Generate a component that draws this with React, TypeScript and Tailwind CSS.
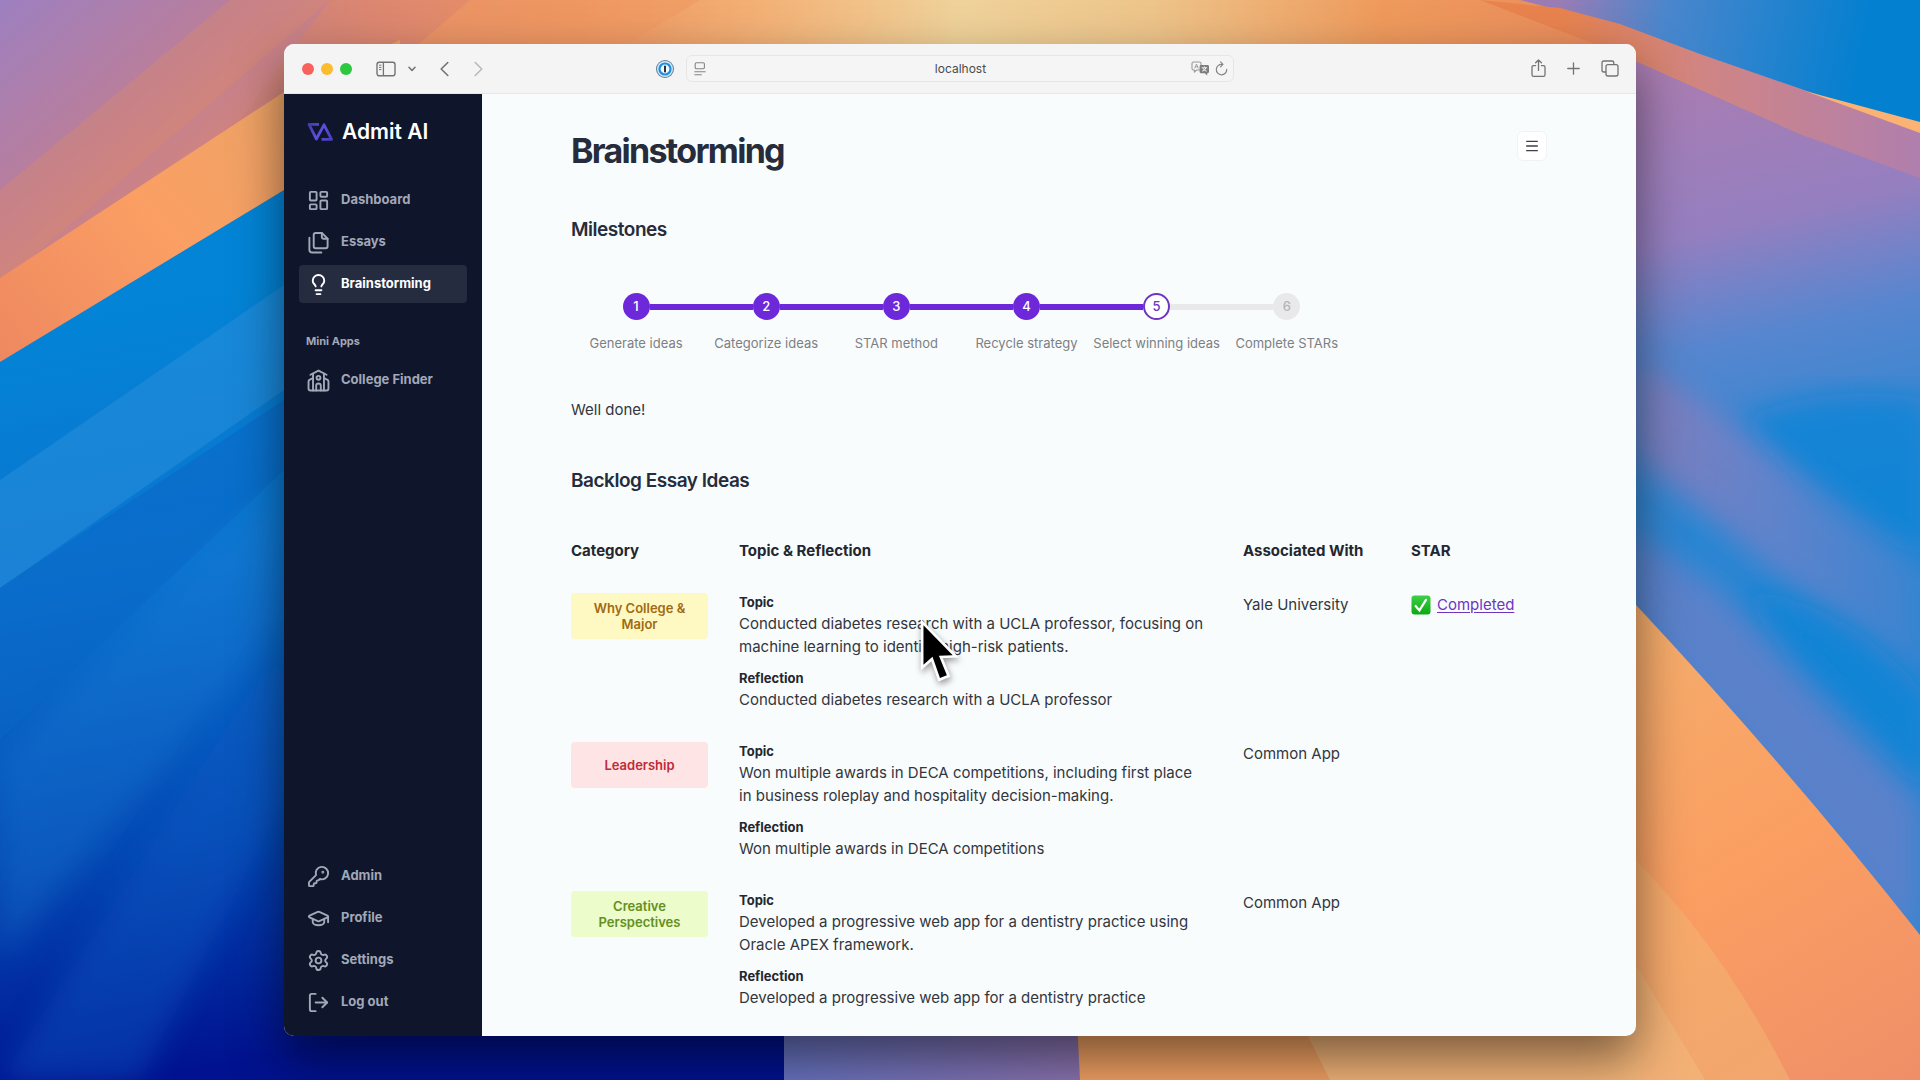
import { useState } from 'react';
import type { ComponentType, ReactNode, SVGProps } from 'react';
import {
  GraduationCap,
  KeyRound,
  LayoutDashboard,
  Lightbulb,
  LogOut,
  Menu,
  Settings,
} from 'lucide-react';

interface NavItem {
  label: string;
  icon: ComponentType<SVGProps<SVGSVGElement>>;
}

interface Idea {
  category: string;
  badge: string;
  topic: string;
  reflection: string;
  associatedWith: string;
  completed?: boolean;
}

function EssaysIcon(props: SVGProps<SVGSVGElement>) {
  return (
    <svg viewBox="0 0 24 24" fill="none" stroke="currentColor" strokeLinecap="round" strokeLinejoin="round" {...props}>
      <path d="M15.5 2 H9 Q7 2 7 4 V16 Q7 18 9 18 H19.5 Q21.5 18 21.5 16 V8 Z" />
      <path d="M15.5 2 V6.6 Q15.5 8 17 8 H21.5" />
      <path d="M2.5 7 V19.5 Q2.5 22.5 5.5 22.5 H15" />
    </svg>
  );
}

function CollegeIcon(props: SVGProps<SVGSVGElement>) {
  return (
    <svg viewBox="0 0 24 24" fill="none" stroke="currentColor" strokeLinecap="round" strokeLinejoin="round" {...props}>
      <path d="M3.6 6 L12 1.6 L20.4 6" />
      <path d="M6.3 5 V22.4 M17.7 5 V22.4" />
      <path d="M6.3 9.6 L3 11 Q1.6 11.6 1.6 13 V20.4 Q1.6 22.4 3.6 22.4 H20.4 Q22.4 22.4 22.4 20.4 V13 Q22.4 11.6 21 11 L17.7 9.6" />
      <circle cx="12" cy="9.2" r="2" />
      <path d="M9.6 22.4 V17.6 Q9.6 15.2 12 15.2 Q14.4 15.2 14.4 17.6 V22.4" />
    </svg>
  );
}

const mainNav: NavItem[] = [
  { label: 'Dashboard', icon: LayoutDashboard },
  { label: 'Essays', icon: EssaysIcon },
  { label: 'Brainstorming', icon: Lightbulb },
];

const miniApps: NavItem[] = [{ label: 'College Finder', icon: CollegeIcon }];

const accountNav: NavItem[] = [
  { label: 'Admin', icon: KeyRound },
  { label: 'Profile', icon: GraduationCap },
  { label: 'Settings', icon: Settings },
  { label: 'Log out', icon: LogOut },
];

const steps = [
  'Generate ideas',
  'Categorize ideas',
  'STAR method',
  'Recycle strategy',
  'Select winning ideas',
  'Complete STARs',
];

const ideas: Idea[] = [
  {
    category: 'Why College & Major',
    badge: 'bg-[#fef9c3] text-[#a16a12]',
    topic:
      'Conducted diabetes research with a UCLA professor, focusing on machine learning to identify high-risk patients.',
    reflection: 'Conducted diabetes research with a UCLA professor',
    associatedWith: 'Yale University',
    completed: true,
  },
  {
    category: 'Leadership',
    badge: 'bg-[#ffe4e6] text-[#be2a38]',
    topic:
      'Won multiple awards in DECA competitions, including first place in business roleplay and hospitality decision-making.',
    reflection: 'Won multiple awards in DECA competitions',
    associatedWith: 'Common App',
  },
  {
    category: 'Creative Perspectives',
    badge: 'bg-[#ecfccb] text-[#648f22]',
    topic:
      'Developed a progressive web app for a dentistry practice using Oracle APEX framework.',
    reflection: 'Developed a progressive web app for a dentistry practice',
    associatedWith: 'Common App',
  },
];

function Wallpaper() {
  return (
    <svg
      className="absolute inset-0 h-full w-full"
      viewBox="0 0 1920 1080"
      preserveAspectRatio="none"
      aria-hidden="true"
    >
      <defs>
        <linearGradient id="top" x1="0" y1="0" x2="1920" y2="0" gradientUnits="userSpaceOnUse">
          <stop offset="0.12" stopColor="#c9817f" />
          <stop offset="0.2" stopColor="#dd8770" />
          <stop offset="0.3" stopColor="#ee9460" />
          <stop offset="0.4" stopColor="#f3b277" />
          <stop offset="0.5" stopColor="#efd29a" />
          <stop offset="0.6" stopColor="#edc48a" />
          <stop offset="0.72" stopColor="#ef9a5c" />
          <stop offset="0.85" stopColor="#e88a5c" />
        </linearGradient>
        <linearGradient id="corner" x1="0" y1="0" x2="200" y2="230" gradientUnits="userSpaceOnUse">
          <stop offset="0" stopColor="#9d80c0" />
          <stop offset="0.5" stopColor="#b97e9c" />
          <stop offset="1" stopColor="#dd8770" />
        </linearGradient>
        <linearGradient id="leftOrange" x1="0" y1="360" x2="320" y2="80" gradientUnits="userSpaceOnUse">
          <stop offset="0" stopColor="#ee8860" />
          <stop offset="0.5" stopColor="#fb9f64" />
          <stop offset="1" stopColor="#e9a467" />
        </linearGradient>
        <linearGradient id="leftBlue" x1="0" y1="330" x2="140" y2="1080" gradientUnits="userSpaceOnUse">
          <stop offset="0" stopColor="#0384d6" />
          <stop offset="0.35" stopColor="#0b73cf" />
          <stop offset="0.7" stopColor="#0448b4" />
          <stop offset="1" stopColor="#00128f" />
        </linearGradient>
        <linearGradient id="topBlue" x1="1560" y1="0" x2="1860" y2="60" gradientUnits="userSpaceOnUse">
          <stop offset="0" stopColor="#9a7cb4" />
          <stop offset="0.35" stopColor="#4a86cc" />
          <stop offset="1" stopColor="#0480d0" />
        </linearGradient>
        <linearGradient id="salmon" x1="1560" y1="0" x2="1920" y2="0" gradientUnits="userSpaceOnUse">
          <stop offset="0" stopColor="#e8834e" />
          <stop offset="0.4" stopColor="#d08584" />
          <stop offset="1" stopColor="#b07fae" />
        </linearGradient>
        <linearGradient id="mauve" x1="1660" y1="80" x2="1760" y2="520" gradientUnits="userSpaceOnUse">
          <stop offset="0" stopColor="#a97db2" />
          <stop offset="0.35" stopColor="#957fc0" />
          <stop offset="0.6" stopColor="#5686cf" />
          <stop offset="1" stopColor="#2a86d3" />
        </linearGradient>
        <linearGradient id="violetStreak" x1="1636" y1="0" x2="1920" y2="0" gradientUnits="userSpaceOnUse">
          <stop offset="0" stopColor="#8f7bb6" />
          <stop offset="0.45" stopColor="#7482c8" />
          <stop offset="1" stopColor="#4184d0" />
        </linearGradient>
        <linearGradient id="rightOrange" x1="1640" y1="620" x2="1920" y2="1080" gradientUnits="userSpaceOnUse">
          <stop offset="0" stopColor="#f5ad6c" />
          <stop offset="0.5" stopColor="#fb9e62" />
          <stop offset="1" stopColor="#ee8f68" />
        </linearGradient>
        <linearGradient id="bottomViolet" x1="780" y1="0" x2="1080" y2="0" gradientUnits="userSpaceOnUse">
          <stop offset="0" stopColor="#6672c0" />
          <stop offset="1" stopColor="#8a72ae" />
        </linearGradient>
        <filter id="soft" x="-10%" y="-10%" width="120%" height="120%">
          <feGaussianBlur stdDeviation="14" />
        </filter>
      </defs>

      <rect width="1920" height="1080" fill="url(#top)" />
      <path d="M0 0 H330 L240 120 L0 290 Z" fill="url(#corner)" />
      <path d="M470 0 H700 L600 60 H400 Z" fill="#f09a62" opacity="0.6" />

      {/* left side, warm folds over the blue ones */}
      <path d="M0 190 L230 0 H330 L0 285 Z" fill="#e08a68" opacity="0.35" />
      <path d="M0 278 L284 92 L400 40 V200 L0 364 Z" fill="url(#leftOrange)" />
      <path d="M0 362 L284 190 L900 500 V1080 H0 Z" fill="url(#leftBlue)" />
      <path d="M0 480 L284 285 V390 L0 588 Z" fill="#2b8fdc" opacity="0.5" />
      <path d="M0 588 L284 400 V470 L0 740 Z" fill="#0a66c6" opacity="0.5" />
      <path d="M0 760 L284 480 V620 L0 960 Z" fill="#1d7fd6" opacity="0.3" filter="url(#soft)" />
      <path d="M0 1080 L284 640 V800 L140 1080 Z" fill="#0a5cc4" opacity="0.4" filter="url(#soft)" />

      {/* right side */}
      <path d="M1520 0 L1600 21 L1700 58 L1800 90 L1920 124 V0 Z" fill="url(#topBlue)" />
      <path d="M1560 8 L1620 24 L1700 54 L1810 92 L1920 132 V180 L1800 134 L1636 60 L1480 0 Z" fill="url(#salmon)" />
      <path d="M1805 91 L1920 122 V133 Z" fill="#fbb272" />
      <path d="M1600 50 L1636 61 L1800 134 L1920 178 V940 L1600 570 Z" fill="url(#mauve)" />
      <path d="M1740 420 Q1830 380 1930 400 V560 Q1820 520 1740 420 Z" fill="#1184d6" opacity="0.8" filter="url(#soft)" />
      <path d="M1636 360 L1700 400 L1920 565 V690 L1760 560 L1636 455 Z" fill="url(#violetStreak)" opacity="0.75" filter="url(#soft)" />
      <path d="M1740 590 Q1850 600 1930 700 V800 L1800 680 Z" fill="#1184d6" opacity="0.8" filter="url(#soft)" />
      <path d="M1620 520 L1720 590 L1920 800 V950 L1620 610 Z" fill="#6a80c8" opacity="0.75" filter="url(#soft)" />
      <path d="M1600 564 L1637 606 Q1790 770 1920 935 V1080 H1600 Z" fill="url(#rightOrange)" />
      <path d="M1620 845 Q1720 940 1790 1080 H1500 V900 Z" fill="#f3b272" opacity="0.6" />
      <path d="M1636 965 L1705 1080 H1500 Z" fill="#f2bb80" opacity="0.5" />

      {/* strip under the window */}
      <path d="M784 1000 H1080 V1080 H784 Z" fill="url(#bottomViolet)" />
      <path d="M1076 1000 H1640 V1080 H1080 Z" fill="#f0a062" />
      <path d="M1290 1000 L1330 1080 H1640 V1000 Z" fill="#f2b478" />
    </svg>
  );
}

function ToolbarButton({ label, children }: { label: string; children: ReactNode }) {
  return (
    <button type="button" aria-label={label} className="flex h-5 items-center justify-center">
      {children}
    </button>
  );
}

function Toolbar() {
  const [url, setUrl] = useState('localhost');

  return (
    <header className="flex h-[50px] shrink-0 items-center border-b border-[#e6e6e6] bg-[#f4f4f4] text-[#737373]">
      <div className="flex flex-1 items-center justify-between pr-3 pl-[18px]">
        <div className="flex items-center">
          <div className="flex gap-[7px]">
            <button type="button" aria-label="Close" className="size-3 rounded-full bg-[#f9625c]" />
            <button type="button" aria-label="Minimize" className="size-3 rounded-full bg-[#fbbd2e]" />
            <button type="button" aria-label="Zoom" className="size-3 rounded-full bg-[#2bc840]" />
          </div>
          <div className="ml-6 flex items-center gap-3">
            <ToolbarButton label="Show sidebar">
              <svg width="20" height="16" viewBox="0 0 20 16" fill="none" stroke="currentColor">
                <rect x="1" y="1.2" width="18" height="13.6" rx="2.2" strokeWidth="1.4" />
                <path d="M7.4 1.2 V14.8" strokeWidth="1.3" />
                <path d="M3 4.2 H5.4 M3 6.4 H5.4 M3 8.6 H5.4" strokeWidth="1" />
              </svg>
            </ToolbarButton>
            <ToolbarButton label="Tab groups">
              <svg width="8" height="6" viewBox="0 0 8 6" fill="none" stroke="currentColor" strokeWidth="1.5" strokeLinecap="round" strokeLinejoin="round">
                <path d="M1 1.2 L4 4.4 L7 1.2" />
              </svg>
            </ToolbarButton>
          </div>
          <div className="ml-6 flex items-center gap-[25px]">
            <ToolbarButton label="Back">
              <svg width="9" height="16" viewBox="0 0 9 16" fill="none" stroke="currentColor" strokeWidth="1.6" strokeLinecap="round" strokeLinejoin="round">
                <path d="M7.8 1.5 L1.2 8 L7.8 14.5" />
              </svg>
            </ToolbarButton>
            <ToolbarButton label="Forward">
              <svg width="9" height="16" viewBox="0 0 9 16" fill="none" stroke="#b9b9b9" strokeWidth="1.6" strokeLinecap="round" strokeLinejoin="round">
                <path d="M1.2 1.5 L7.8 8 L1.2 14.5" />
              </svg>
            </ToolbarButton>
          </div>
        </div>
        <ToolbarButton label="Password manager">
          <svg width="18" height="18" viewBox="0 0 18 18">
            <circle cx="9" cy="9" r="9" fill="#5e7f96" />
            <circle cx="9" cy="9" r="8" fill="#cfe6f6" />
            <circle cx="9" cy="9" r="6.6" fill="#1f8fe0" />
            <circle cx="9" cy="9" r="4.4" fill="#f3f8fc" />
            <rect x="8" y="5.4" width="2" height="7.2" rx="0.8" fill="#2c2f3a" />
          </svg>
        </ToolbarButton>
      </div>

      <div className="flex h-[27px] w-[548px] items-center rounded-md border border-[#e6e6e6] bg-[#f5f5f5] pr-[5px] pl-[7px]">
        <ToolbarButton label="Page settings">
          <svg width="12" height="14" viewBox="0 0 12 14" fill="none" stroke="#848484" strokeWidth="1.1" strokeLinecap="round">
            <rect x="1.2" y="0.8" width="9.2" height="6" rx="1.2" />
            <path d="M0.8 9.8 H11.2 M0.8 12.8 H7.4" />
          </svg>
        </ToolbarButton>
        <input
          type="text"
          aria-label="Address"
          className="min-w-0 flex-1 bg-transparent pl-6 text-center text-[12px] text-[#4b4b4b] outline-none"
          value={url}
          onChange={(e) => setUrl(e.target.value)}
        />
        <div className="flex items-center gap-[5px]">
          <ToolbarButton label="Translate">
            <svg width="19" height="15" viewBox="0 0 19 15" fill="none" strokeLinejoin="round" strokeLinecap="round">
              <path d="M2.4 1 H8.6 Q10 1 10 2.4 V7.6 Q10 9 8.6 9 H5.6 L3.4 11.2 V9 H2.4 Q1 9 1 7.6 V2.4 Q1 1 2.4 1 Z" stroke="#9a9a9a" strokeWidth="1.1" />
              <path d="M3.8 7 L5.5 3 L7.2 7 M4.4 5.8 H6.6" stroke="#9a9a9a" strokeWidth="0.9" />
              <path d="M10 4 H16.6 Q18 4 18 5.4 V10.8 Q18 12.2 16.6 12.2 H16.2 V14.4 L13.8 12.2 H10 Q8.6 12.2 8.6 10.8 V5.4 Q8.6 4 10 4 Z" fill="#7d7d7d" />
              <path d="M11 6.8 H15.8 M13.4 5.8 V6.8 M11.4 10.2 Q14.4 9.6 15 6.8 M12 7.4 Q13 9.8 15.4 10.2" stroke="#f5f5f5" strokeWidth="0.9" />
            </svg>
          </ToolbarButton>
          <ToolbarButton label="Reload">
            <svg width="13" height="15" viewBox="0 0 13 15" fill="none" stroke="#858585" strokeWidth="1.2" strokeLinecap="round" strokeLinejoin="round">
              <path d="M7 3.4 A5.2 5.2 0 1 0 11.7 8.4" />
              <path d="M5.6 0.9 L8 3.4 L5.6 5.8" />
            </svg>
          </ToolbarButton>
        </div>
      </div>

      <div className="flex flex-1 items-center justify-end gap-[21px] pr-[17px] pl-[13px]">
        <ToolbarButton label="Share">
          <svg width="15" height="19" viewBox="0 0 15 19" fill="none" stroke="currentColor" strokeWidth="1.3" strokeLinecap="round" strokeLinejoin="round">
            <path d="M4.6 6.6 H2.6 Q1 6.6 1 8.2 V15.8 Q1 17.4 2.6 17.4 H12.4 Q14 17.4 14 15.8 V8.2 Q14 6.6 12.4 6.6 H10.4" />
            <path d="M7.5 11.4 V1.2 M4.6 3.8 L7.5 1 L10.4 3.8" />
          </svg>
        </ToolbarButton>
        <ToolbarButton label="New tab">
          <svg width="13" height="13" viewBox="0 0 13 13" stroke="currentColor" strokeWidth="1.3" strokeLinecap="round">
            <path d="M6.5 0.8 V12.2 M0.8 6.5 H12.2" />
          </svg>
        </ToolbarButton>
        <ToolbarButton label="Tab overview">
          <svg width="18" height="17" viewBox="0 0 18 17" fill="none" stroke="currentColor" strokeWidth="1.3" strokeLinejoin="round">
            <rect x="5" y="4.6" width="12" height="11.4" rx="2" />
            <path d="M5 12 H2.8 Q1 12 1 10.2 V2.8 Q1 1 2.8 1 H11 Q12.8 1 12.8 2.8 V4.6" />
          </svg>
        </ToolbarButton>
      </div>
    </header>
  );
}

function NavList({
  items,
  active,
  onSelect,
}: {
  items: NavItem[];
  active: string;
  onSelect: (label: string) => void;
}) {
  return (
    <ul className="flex flex-col gap-1">
      {items.map(({ label, icon: Icon }) => (
        <li key={label}>
          <a
            href="#"
            onClick={(e) => {
              e.preventDefault();
              onSelect(label);
            }}
            className={`flex h-[38px] items-center gap-[11px] rounded-sm px-2 text-[13px] font-bold ${
              active === label ? 'bg-[#262c3f] text-white' : 'text-[#a2a8b8]'
            }`}
          >
            <Icon className="size-[23px]" strokeWidth={2} />
            {label}
          </a>
        </li>
      ))}
    </ul>
  );
}

function Sidebar() {
  const [active, setActive] = useState('Brainstorming');

  return (
    <aside className="flex w-[198px] shrink-0 flex-col bg-[#0f152a] px-[15px] pt-[26px] pb-[15px]">
      <a href="#" className="flex h-6 items-center gap-2 pl-[7px] text-white">
        <svg width="28" height="20" viewBox="0 0 28 20" fill="none" strokeWidth="2.8" strokeLinejoin="round">
          <defs>
            <linearGradient id="brand" x1="0" y1="0" x2="28" y2="20" gradientUnits="userSpaceOnUse">
              <stop offset="0" stopColor="#3d35a0" />
              <stop offset="0.5" stopColor="#5b50e0" />
              <stop offset="1" stopColor="#4239b0" />
            </linearGradient>
          </defs>
          <path d="M13 2.4 H3 L10.4 17 L18 2.8 L25.6 17.4 H15.6" stroke="url(#brand)" />
        </svg>
        <span className="text-[21px] leading-6 font-semibold whitespace-nowrap">Admit AI</span>
      </a>

      <nav className="mt-[37px] flex flex-1 flex-col">
        <NavList items={mainNav} active={active} onSelect={setActive} />
        <h2 className="mt-[30px] mb-3 pl-[7px] text-[11px] leading-4 font-bold text-[#a2a8b8]">
          Mini Apps
        </h2>
        <NavList items={miniApps} active={active} onSelect={setActive} />
        <div className="mt-auto pt-8">
          <NavList items={accountNav} active={active} onSelect={setActive} />
        </div>
      </nav>
    </aside>
  );
}

function Stepper({ current }: { current: number }) {
  return (
    <ol className="mt-[49px] grid w-4/5 grid-cols-6">
      {steps.map((label, i) => {
        const step = i + 1;
        let circle = 'bg-[#e9e9eb] text-[#b4b4b8]';
        if (step < current) circle = 'bg-[#6d28d9] text-white';
        if (step === current) circle = 'border-2 border-[#6d35c0] bg-white text-[#6d35c0]';

        return (
          <li key={label} className="flex flex-col items-center gap-[13px]">
            <div className="flex w-full items-center">
              <span
                className={`h-[6px] flex-1 ${
                  i === 0 ? 'bg-transparent' : step <= current ? 'bg-[#6d28d9]' : 'bg-[#e9e9eb]'
                }`}
              />
              <span
                className={`flex size-[27px] items-center justify-center rounded-full text-[13px] font-medium ${circle}`}
              >
                {step}
              </span>
              <span
                className={`h-[6px] flex-1 ${
                  step === steps.length
                    ? 'bg-transparent'
                    : step < current
                      ? 'bg-[#6d28d9]'
                      : 'bg-[#e9e9eb]'
                }`}
              />
            </div>
            <span className="text-[13px] leading-5 whitespace-nowrap text-[#7c8084]">{label}</span>
          </li>
        );
      })}
    </ol>
  );
}

function Cursor() {
  return (
    <svg
      className="absolute top-[27px] left-[180px] drop-shadow-[1px_3px_3px_rgba(0,0,0,0.4)]"
      width="43"
      height="66"
      viewBox="0 0 40 62"
      aria-hidden="true"
    >
      <path
        d="M4 5 V42 L12.5 34.5 L19.5 54.5 L26 52 L18.5 33.5 L31.5 33 Z"
        fill="#000"
        stroke="#fff"
        strokeWidth="5"
        paintOrder="stroke"
      />
    </svg>
  );
}

function CheckMark() {
  return (
    <svg width="20" height="20" viewBox="0 0 20 20" role="img" aria-label="Done">
      <defs>
        <linearGradient id="check" x1="0" y1="0" x2="0" y2="20" gradientUnits="userSpaceOnUse">
          <stop offset="0" stopColor="#3fd04a" />
          <stop offset="1" stopColor="#0aa80f" />
        </linearGradient>
      </defs>
      <rect x="0.5" y="0.5" width="19" height="19" rx="3" fill="url(#check)" />
      <path d="M4.6 11 L8.4 15.4 L15 4.8" fill="none" stroke="#fff" strokeWidth="2.2" strokeLinecap="round" />
    </svg>
  );
}

function IdeasTable() {
  return (
    <table className="mt-[44px] w-full table-fixed text-left text-[15px] leading-[23px] text-[#32363d]">
      <colgroup>
        <col className="w-[168px]" />
        <col />
        <col className="w-[168px]" />
        <col className="w-[136px]" />
      </colgroup>
      <thead>
        <tr className="text-[#23272f]">
          <th className="font-bold">Category</th>
          <th className="font-bold">Topic &amp; Reflection</th>
          <th className="font-bold">Associated With</th>
          <th className="font-bold">STAR</th>
        </tr>
      </thead>
      <tbody>
        {ideas.map((idea) => (
          <tr key={idea.category} className="align-top">
            <td className="pt-[31px] pr-[31px]">
              <div
                className={`flex h-[46px] items-center justify-center rounded-sm px-4 text-center text-[13px] leading-4 font-semibold ${idea.badge}`}
              >
                {idea.category}
              </div>
            </td>
            <td className="relative pt-[31px] pr-9">
              <h3 className="text-[13px] leading-[19px] font-bold text-[#23272f]">Topic</h3>
              <p>{idea.topic}</p>
              <h3 className="mt-[11px] text-[13px] leading-[19px] font-bold text-[#23272f]">
                Reflection
              </h3>
              <p>{idea.reflection}</p>
              {idea.completed && (
                <div className="absolute top-[31px] left-0">
                  <Cursor />
                </div>
              )}
            </td>
            <td className="pt-[31px]">{idea.associatedWith}</td>
            <td className="pt-[31px]">
              {idea.completed && (
                <div className="flex items-center gap-[6px]">
                  <CheckMark />
                  <a href="#" className="text-[#6d35c0] underline underline-offset-2">
                    Completed
                  </a>
                </div>
              )}
            </td>
          </tr>
        ))}
      </tbody>
    </table>
  );
}

export default function App() {
  return (
    <div className="relative flex min-h-screen bg-[#0b5cc0] px-71 py-11 font-[Inter,sans-serif]">
      <Wallpaper />
      <div className="relative flex flex-1 flex-col overflow-hidden rounded-[10px] bg-[#f9fcfd] shadow-[0_22px_50px_rgba(0,0,0,0.5)]">
        <Toolbar />
        <div className="flex flex-1">
          <Sidebar />
          <main className="min-w-0 flex-1 px-[89px] pt-[37px] pb-6">
            <div className="flex items-start justify-between">
              <h1 className="text-[34px] leading-10 font-bold tracking-tighter text-[#262c3b]">
                Brainstorming
              </h1>
              <button
                type="button"
                aria-label="Menu"
                className="flex size-[30px] items-center justify-center rounded-md border border-[#f0f2f3] bg-white text-[#3c3f45]"
              >
                <Menu className="size-4" />
              </button>
            </div>

            <h2 className="mt-[45px] text-[19px] leading-7 font-semibold tracking-tight text-[#262c3b]">
              Milestones
            </h2>
            <Stepper current={5} />

            <p className="mt-[45px] text-[15px] leading-[23px] text-[#32363d]">Well done!</p>

            <h2 className="mt-[46px] text-[19px] leading-7 font-semibold tracking-tight text-[#262c3b]">
              Backlog Essay Ideas
            </h2>
            <IdeasTable />
          </main>
        </div>
      </div>
    </div>
  );
}
